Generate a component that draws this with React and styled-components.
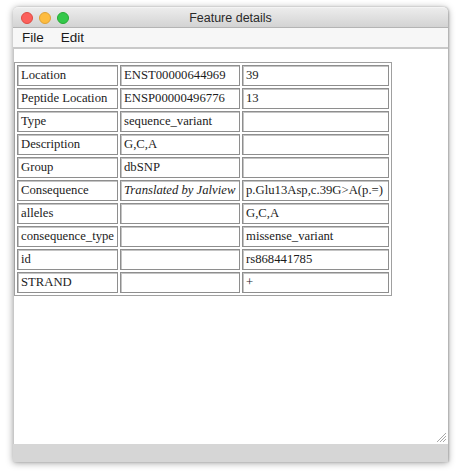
import React from 'react'
import styled, { createGlobalStyle } from 'styled-components'

const Global = createGlobalStyle`
  html, body { margin: 0; padding: 0; background: #ffffff; }
  #root { width: 460px; height: 472px; overflow: hidden; }
`

const Window = styled.div`
  margin: 7px 0 0 13px;
  width: 435px;
  height: 455px;
  display: flex;
  flex-direction: column;
  background: #d6d6d6;
  border-radius: 5px 5px 0 0;
  box-shadow: 0 1px 7px rgba(0, 0, 0, 0.38), 1px 0 2px rgba(0, 0, 0, 0.2);
`

const TitleBar = styled.div`
  height: 21px;
  display: grid;
  grid-template-columns: 1fr auto 1fr;
  align-items: center;
  background: linear-gradient(#ececec, #d3d3d3);
  border-top: 1px solid #f4f4f4;
  border-bottom: 1px solid #b4b4b4;
  border-radius: 5px 5px 0 0;
  box-sizing: border-box;
`

const Lights = styled.div`
  display: flex;
  gap: 6px;
  padding-left: 8px;
`

const Light = styled.span`
  width: 12px;
  height: 12px;
  border-radius: 50%;
  box-sizing: border-box;
  background: ${p => p.color};
  border: 1px solid ${p => p.edge};
`

const Title = styled.div`
  font-family: "Liberation Sans", Arial, sans-serif;
  font-size: 12.5px;
  color: #2a2a2a;
`

const MenuBar = styled.div`
  height: 19px;
  display: flex;
  align-items: center;
  gap: 17px;
  padding-left: 9px;
  background: #f7f7f7;
  border-bottom: 2px solid #c9c9c9;
`

const MenuItem = styled.span`
  font-family: "Liberation Sans", Arial, sans-serif;
  font-size: 13.5px;
  color: #1a1a1a;
`

const Content = styled.div`
  position: relative;
  flex: 1;
  background: #ffffff;
  border-left: 1px solid #c8c8c8;
  padding: 13px 0 0 0;
`

const Table = styled.table`
  border: 1px solid #a0a0a0;
  border-spacing: 2px;
`

const Cell = styled.td`
  box-sizing: border-box;
  width: ${p => p.w}px;
  height: 21px;
  padding: 0 3px;
  border: 1px solid #8e8e8e;
  box-shadow: inset 1px 1px 0 #c4c4c4;
  white-space: nowrap;
  vertical-align: middle;
  font-family: "Liberation Serif", "Times New Roman", serif;
  font-size: 12.7px;
  color: #1c1c1c;
  font-style: ${p => (p.italic ? 'italic' : 'normal')};
`

const Grip = styled.svg`
  position: absolute;
  right: 1px;
  bottom: 1px;
`

const Footer = styled.div`
  height: 18px;
  background: #d6d6d6;
`

const rows = [
  ['Location', 'ENST00000644969', '39'],
  ['Peptide Location', 'ENSP00000496776', '13'],
  ['Type', 'sequence_variant', ''],
  ['Description', 'G,C,A', ''],
  ['Group', 'dbSNP', ''],
  ['Consequence', 'Translated by Jalview', 'p.Glu13Asp,c.39G>A(p.=)'],
  ['alleles', '', 'G,C,A'],
  ['consequence_type', '', 'missense_variant'],
  ['id', '', 'rs868441785'],
  ['STRAND', '', '+'],
]

export default function App() {
  return (
    <>
      <Global />
      <Window>
        <TitleBar>
          <Lights>
            <Light color="#fc605c" edge="#de4b43" />
            <Light color="#fdbc40" edge="#dea236" />
            <Light color="#34c84a" edge="#27aa35" />
          </Lights>
          <Title>Feature details</Title>
          <span />
        </TitleBar>
        <MenuBar>
          <MenuItem>File</MenuItem>
          <MenuItem>Edit</MenuItem>
        </MenuBar>
        <Content>
          <Table>
            <tbody>
              {rows.map(r => (
                <tr key={r[0]}>
                  <Cell w={100}>{r[0]}</Cell>
                  <Cell w={120} italic={r[0] === 'Consequence'}>{r[1]}</Cell>
                  <Cell w={147}>{r[2]}</Cell>
                </tr>
              ))}
            </tbody>
          </Table>
          <Grip width="11" height="11" viewBox="0 0 11 11">
            <g stroke="#a8a8a8" strokeWidth="1">
              <line x1="1" y1="10" x2="10" y2="1" />
              <line x1="4" y1="10" x2="10" y2="4" />
              <line x1="7" y1="10" x2="10" y2="7" />
            </g>
          </Grip>
        </Content>
        <Footer />
      </Window>
    </>
  )
}
